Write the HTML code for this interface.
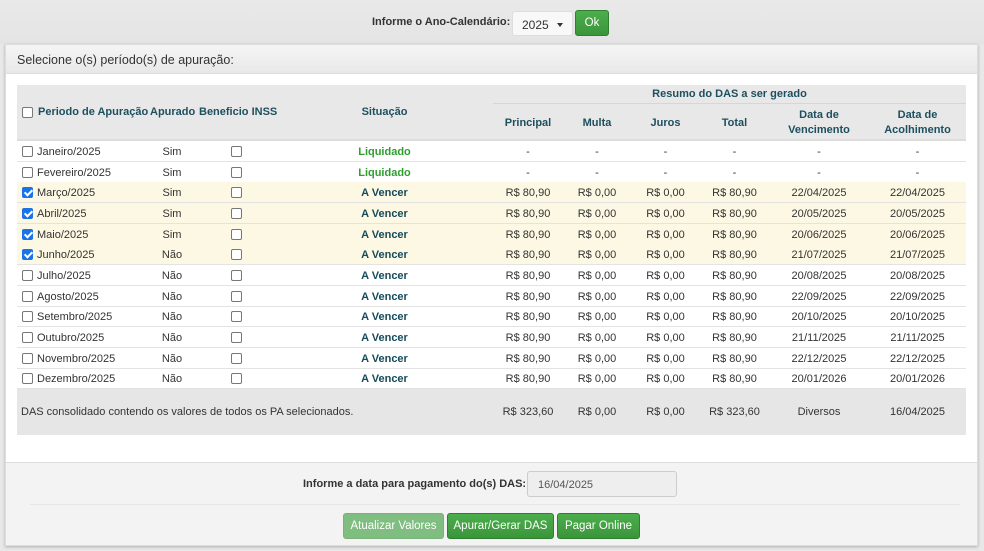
<!DOCTYPE html>
<html><head><meta charset="utf-8"><style>
*{box-sizing:border-box;margin:0;padding:0}
body{width:984px;height:551px;background:#e8e8e8;font-family:"Liberation Sans",Arial,sans-serif;font-size:11px;color:#333;position:relative;overflow:hidden}
.a{position:absolute}
.top{left:0;top:0;width:984px;height:44px;background:linear-gradient(#e9e9e9,#e4e4e4)}
.lbl{font-weight:bold;color:#333}
.panel{left:5px;top:44px;width:973px;height:502px;background:#fff;border:1px solid #ddd;box-shadow:0 1px 3px rgba(0,0,0,.25)}
.ph{left:0;top:0;width:971px;height:29px;background:linear-gradient(#f5f5f5,#e8e8e8);border-bottom:1px solid #ddd;font-size:12.5px;color:#333;padding:8px 0 0 11px}
.hd{background:#e8e8e8}
.ht{font-weight:bold;color:#1d4f5f;text-align:center;font-size:11px}
.row{left:17px;width:949px;height:21px;border-bottom:1px solid #e3e3e3}
.row span{position:absolute;top:5px;white-space:nowrap}
.c{text-align:center}
.cb{position:absolute;width:11px;height:11px;border:1px solid #777;border-radius:2px;background:#fff}
.ck{background:#1a73e8;border-color:#1a73e8}
.ck:after{content:"";position:absolute;left:3px;top:0px;width:3px;height:6px;border:solid #fff;border-width:0 2px 2px 0;transform:rotate(45deg)}
.y{background:#fcf8e3}
.liq{color:#2f9e2f;font-weight:bold}
.av{color:#164b5b;font-weight:bold}
.btn{height:26px;border-radius:3px;color:#fff;font-size:11.5px;text-align:center;line-height:25px;background:linear-gradient(#4cae4c,#3a953a);border:1px solid #2f7f2f}
</style></head><body>
<div class="a top"></div>
<div class="a lbl" style="left:372px;top:16px">Informe o Ano-Calendário:</div>
<div class="a" style="left:512px;top:11px;width:61px;height:25px;background:#f8f8f8;border:1px solid #ddd;border-radius:3px;font-size:12px;padding:6px 0 0 9px">2025<span style="position:absolute;left:44px;top:11px;border-left:3px solid transparent;border-right:3px solid transparent;border-top:4px solid #333"></span></div>
<div class="a btn" style="left:575px;top:10px;width:34px;">Ok</div>

<div class="a panel">
<div class="a ph">Selecione o(s) período(s) de apuração:</div>
</div>
<div class="a hd" style="left:17px;top:85px;width:949px;height:56px;border-bottom:2px solid #ddd"></div>
<div class="a" style="left:493px;top:103px;width:473px;height:1px;background:#d6d6d6"></div>
<div class="a cb" style="left:22px;top:107px"></div>
<div class="a ht" style="left:38px;top:106px">Periodo de Apuração</div>
<div class="a ht" style="left:150px;top:106px">Apurado</div>
<div class="a ht" style="left:199px;top:106px">Beneficio INSS</div>
<div class="a ht" style="left:276px;top:106px;width:217px">Situação</div>
<div class="a ht" style="left:493px;top:88px;width:473px">Resumo do DAS a ser gerado</div>
<div class="a ht" style="left:493px;top:117px;width:70px">Principal</div>
<div class="a ht" style="left:563px;top:117px;width:68px">Multa</div>
<div class="a ht" style="left:631px;top:117px;width:69px">Juros</div>
<div class="a ht" style="left:700px;top:117px;width:69px">Total</div>
<div class="a ht" style="left:769px;top:108px;width:100px;line-height:15px">Data de<br>Vencimento</div>
<div class="a ht" style="left:869px;top:108px;width:97px;line-height:15px">Data de<br>Acolhimento</div>

<div class="a row" style="top:141px"><i class="cb" style="left:5px;top:5px"></i><span style="left:20px">Janeiro/2025</span><span class="c" style="left:130px;width:50px">Sim</span><i class="cb" style="left:214px;top:5px"></i><span class="c liq" style="left:259px;width:217px">Liquidado</span><span class="c" style="left:476px;width:70px">-</span><span class="c" style="left:546px;width:68px">-</span><span class="c" style="left:614px;width:69px">-</span><span class="c" style="left:683px;width:69px">-</span><span class="c" style="left:752px;width:100px">-</span><span class="c" style="left:852px;width:97px">-</span></div>
<div class="a row" style="top:162px"><i class="cb" style="left:5px;top:5px"></i><span style="left:20px">Fevereiro/2025</span><span class="c" style="left:130px;width:50px">Sim</span><i class="cb" style="left:214px;top:5px"></i><span class="c liq" style="left:259px;width:217px">Liquidado</span><span class="c" style="left:476px;width:70px">-</span><span class="c" style="left:546px;width:68px">-</span><span class="c" style="left:614px;width:69px">-</span><span class="c" style="left:683px;width:69px">-</span><span class="c" style="left:752px;width:100px">-</span><span class="c" style="left:852px;width:97px">-</span></div>
<div class="a row y" style="top:182px"><i class="cb ck" style="left:5px;top:5px"></i><span style="left:20px">Março/2025</span><span class="c" style="left:130px;width:50px">Sim</span><i class="cb" style="left:214px;top:5px"></i><span class="c av" style="left:259px;width:217px">A Vencer</span><span class="c" style="left:476px;width:70px">R$ 80,90</span><span class="c" style="left:546px;width:68px">R$ 0,00</span><span class="c" style="left:614px;width:69px">R$ 0,00</span><span class="c" style="left:683px;width:69px">R$ 80,90</span><span class="c" style="left:752px;width:100px">22/04/2025</span><span class="c" style="left:852px;width:97px">22/04/2025</span></div>
<div class="a row y" style="top:203px"><i class="cb ck" style="left:5px;top:5px"></i><span style="left:20px">Abril/2025</span><span class="c" style="left:130px;width:50px">Sim</span><i class="cb" style="left:214px;top:5px"></i><span class="c av" style="left:259px;width:217px">A Vencer</span><span class="c" style="left:476px;width:70px">R$ 80,90</span><span class="c" style="left:546px;width:68px">R$ 0,00</span><span class="c" style="left:614px;width:69px">R$ 0,00</span><span class="c" style="left:683px;width:69px">R$ 80,90</span><span class="c" style="left:752px;width:100px">20/05/2025</span><span class="c" style="left:852px;width:97px">20/05/2025</span></div>
<div class="a row y" style="top:224px"><i class="cb ck" style="left:5px;top:5px"></i><span style="left:20px">Maio/2025</span><span class="c" style="left:130px;width:50px">Sim</span><i class="cb" style="left:214px;top:5px"></i><span class="c av" style="left:259px;width:217px">A Vencer</span><span class="c" style="left:476px;width:70px">R$ 80,90</span><span class="c" style="left:546px;width:68px">R$ 0,00</span><span class="c" style="left:614px;width:69px">R$ 0,00</span><span class="c" style="left:683px;width:69px">R$ 80,90</span><span class="c" style="left:752px;width:100px">20/06/2025</span><span class="c" style="left:852px;width:97px">20/06/2025</span></div>
<div class="a row y" style="top:244px"><i class="cb ck" style="left:5px;top:5px"></i><span style="left:20px">Junho/2025</span><span class="c" style="left:130px;width:50px">Não</span><i class="cb" style="left:214px;top:5px"></i><span class="c av" style="left:259px;width:217px">A Vencer</span><span class="c" style="left:476px;width:70px">R$ 80,90</span><span class="c" style="left:546px;width:68px">R$ 0,00</span><span class="c" style="left:614px;width:69px">R$ 0,00</span><span class="c" style="left:683px;width:69px">R$ 80,90</span><span class="c" style="left:752px;width:100px">21/07/2025</span><span class="c" style="left:852px;width:97px">21/07/2025</span></div>
<div class="a row" style="top:265px"><i class="cb" style="left:5px;top:5px"></i><span style="left:20px">Julho/2025</span><span class="c" style="left:130px;width:50px">Não</span><i class="cb" style="left:214px;top:5px"></i><span class="c av" style="left:259px;width:217px">A Vencer</span><span class="c" style="left:476px;width:70px">R$ 80,90</span><span class="c" style="left:546px;width:68px">R$ 0,00</span><span class="c" style="left:614px;width:69px">R$ 0,00</span><span class="c" style="left:683px;width:69px">R$ 80,90</span><span class="c" style="left:752px;width:100px">20/08/2025</span><span class="c" style="left:852px;width:97px">20/08/2025</span></div>
<div class="a row" style="top:286px"><i class="cb" style="left:5px;top:5px"></i><span style="left:20px">Agosto/2025</span><span class="c" style="left:130px;width:50px">Não</span><i class="cb" style="left:214px;top:5px"></i><span class="c av" style="left:259px;width:217px">A Vencer</span><span class="c" style="left:476px;width:70px">R$ 80,90</span><span class="c" style="left:546px;width:68px">R$ 0,00</span><span class="c" style="left:614px;width:69px">R$ 0,00</span><span class="c" style="left:683px;width:69px">R$ 80,90</span><span class="c" style="left:752px;width:100px">22/09/2025</span><span class="c" style="left:852px;width:97px">22/09/2025</span></div>
<div class="a row" style="top:306px"><i class="cb" style="left:5px;top:5px"></i><span style="left:20px">Setembro/2025</span><span class="c" style="left:130px;width:50px">Não</span><i class="cb" style="left:214px;top:5px"></i><span class="c av" style="left:259px;width:217px">A Vencer</span><span class="c" style="left:476px;width:70px">R$ 80,90</span><span class="c" style="left:546px;width:68px">R$ 0,00</span><span class="c" style="left:614px;width:69px">R$ 0,00</span><span class="c" style="left:683px;width:69px">R$ 80,90</span><span class="c" style="left:752px;width:100px">20/10/2025</span><span class="c" style="left:852px;width:97px">20/10/2025</span></div>
<div class="a row" style="top:327px"><i class="cb" style="left:5px;top:5px"></i><span style="left:20px">Outubro/2025</span><span class="c" style="left:130px;width:50px">Não</span><i class="cb" style="left:214px;top:5px"></i><span class="c av" style="left:259px;width:217px">A Vencer</span><span class="c" style="left:476px;width:70px">R$ 80,90</span><span class="c" style="left:546px;width:68px">R$ 0,00</span><span class="c" style="left:614px;width:69px">R$ 0,00</span><span class="c" style="left:683px;width:69px">R$ 80,90</span><span class="c" style="left:752px;width:100px">21/11/2025</span><span class="c" style="left:852px;width:97px">21/11/2025</span></div>
<div class="a row" style="top:348px"><i class="cb" style="left:5px;top:5px"></i><span style="left:20px">Novembro/2025</span><span class="c" style="left:130px;width:50px">Não</span><i class="cb" style="left:214px;top:5px"></i><span class="c av" style="left:259px;width:217px">A Vencer</span><span class="c" style="left:476px;width:70px">R$ 80,90</span><span class="c" style="left:546px;width:68px">R$ 0,00</span><span class="c" style="left:614px;width:69px">R$ 0,00</span><span class="c" style="left:683px;width:69px">R$ 80,90</span><span class="c" style="left:752px;width:100px">22/12/2025</span><span class="c" style="left:852px;width:97px">22/12/2025</span></div>
<div class="a row" style="top:368px"><i class="cb" style="left:5px;top:5px"></i><span style="left:20px">Dezembro/2025</span><span class="c" style="left:130px;width:50px">Não</span><i class="cb" style="left:214px;top:5px"></i><span class="c av" style="left:259px;width:217px">A Vencer</span><span class="c" style="left:476px;width:70px">R$ 80,90</span><span class="c" style="left:546px;width:68px">R$ 0,00</span><span class="c" style="left:614px;width:69px">R$ 0,00</span><span class="c" style="left:683px;width:69px">R$ 80,90</span><span class="c" style="left:752px;width:100px">20/01/2026</span><span class="c" style="left:852px;width:97px">20/01/2026</span></div>
<div class="a row" style="top:389px;height:46px;background:#e6e6e6;border:none"><span style="left:4px;top:17px">DAS consolidado contendo os valores de todos os PA selecionados.</span><span class="c" style="left:476px;width:70px;top:17px">R$ 323,60</span><span class="c" style="left:546px;width:68px;top:17px">R$ 0,00</span><span class="c" style="left:614px;width:69px;top:17px">R$ 0,00</span><span class="c" style="left:683px;width:69px;top:17px">R$ 323,60</span><span class="c" style="left:752px;width:100px;top:17px">Diversos</span><span class="c" style="left:852px;width:97px;top:17px">16/04/2025</span></div>

<div class="a" style="left:6px;top:462px;width:971px;height:83px;background:#f3f3f3;border-top:1px solid #ddd"></div>
<div class="a" style="left:30px;top:504px;width:930px;height:1px;background:#e6e6e6"></div>
<div class="a lbl" style="left:303px;top:478px">Informe a data para pagamento do(s) DAS:</div>
<div class="a" style="left:527px;top:471px;width:150px;height:26px;background:#eee;border:1px solid #ccc;border-radius:3px;padding:7px 0 0 10px;color:#555">16/04/2025</div>
<div class="a btn" style="left:343px;top:513px;width:101px;background:#80bd80;border-color:#78b278">Atualizar Valores</div>
<div class="a btn" style="left:447px;top:513px;width:107px">Apurar/Gerar DAS</div>
<div class="a btn" style="left:557px;top:513px;width:83px">Pagar Online</div>
</body></html>
